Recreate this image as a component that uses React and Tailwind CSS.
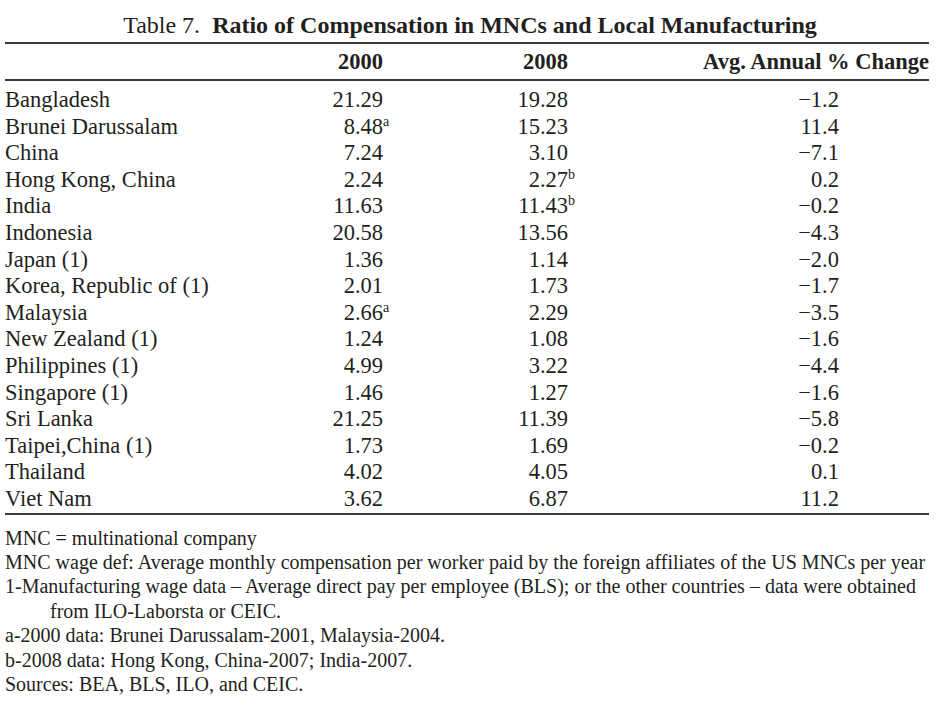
const rows = [
  { name: "Bangladesh", a: "21.29", b: "19.28", c: "\u22121.2" },
  { name: "Brunei Darussalam", a: "8.48", aSup: "a", b: "15.23", c: "11.4" },
  { name: "China", a: "7.24", b: "3.10", c: "\u22127.1" },
  { name: "Hong Kong, China", a: "2.24", b: "2.27", bSup: "b", c: "0.2" },
  { name: "India", a: "11.63", b: "11.43", bSup: "b", c: "\u22120.2" },
  { name: "Indonesia", a: "20.58", b: "13.56", c: "\u22124.3" },
  { name: "Japan (1)", a: "1.36", b: "1.14", c: "\u22122.0" },
  { name: "Korea, Republic of (1)", a: "2.01", b: "1.73", c: "\u22121.7" },
  { name: "Malaysia", a: "2.66", aSup: "a", b: "2.29", c: "\u22123.5" },
  { name: "New Zealand (1)", a: "1.24", b: "1.08", c: "\u22121.6" },
  { name: "Philippines (1)", a: "4.99", b: "3.22", c: "\u22124.4" },
  { name: "Singapore (1)", a: "1.46", b: "1.27", c: "\u22121.6" },
  { name: "Sri Lanka", a: "21.25", b: "11.39", c: "\u22125.8" },
  { name: "Taipei,China (1)", a: "1.73", b: "1.69", c: "\u22120.2" },
  { name: "Thailand", a: "4.02", b: "4.05", c: "0.1" },
  { name: "Viet Nam", a: "3.62", b: "6.87", c: "11.2" },
];

// number with optional superscript hanging past the right edge
function Num({ value, sup }) {
  return (
    <span className="relative">
      {value}
      {sup && (
        <span className="absolute left-full top-[1px] text-[14px] leading-none">{sup}</span>
      )}
    </span>
  );
}

export default function App() {
  return (
    <div
      className="w-[940px] h-[706px] bg-white text-[#231f20] overflow-hidden"
      style={{ fontFamily: '"Liberation Serif", "Times New Roman", serif' }}
    >
      <div className="pt-[11px] text-center text-[24px] leading-[28px]">
        Table 7.&nbsp;&nbsp;
        <span className="font-bold">Ratio of Compensation in MNCs and Local Manufacturing</span>
      </div>

      <table className="ml-[5px] mt-[3px] w-[924px] border-collapse table-fixed">
        <colgroup>
          <col className="w-[296px]" />
          <col className="w-[82px]" />
          <col className="w-[185px]" />
          <col className="w-[361px]" />
        </colgroup>
        <thead>
          <tr className="border-t-2 border-b-2 border-[#3a3a3a] text-[22.5px] font-bold">
            <th className="h-[37px]"></th>
            <th className="text-right">2000</th>
            <th className="text-right">2008</th>
            <th className="text-right">Avg. Annual % Change</th>
          </tr>
        </thead>
        <tbody className="text-[22.5px] leading-[26.6px] border-b-2 border-[#3a3a3a]">
          <tr>
            <td colSpan="4" className="h-[7px] p-0"></td>
          </tr>
          {rows.map((r) => (
            <tr key={r.name}>
              <td className="whitespace-nowrap">{r.name}</td>
              <td className="text-right">
                <Num value={r.a} sup={r.aSup} />
              </td>
              <td className="text-right">
                <Num value={r.b} sup={r.bSup} />
              </td>
              <td className="text-right pr-[90px]">{r.c}</td>
            </tr>
          ))}
        </tbody>
      </table>

      <div className="pl-[5px] pt-[11px] text-[20px] leading-[24.4px]">
        <div>MNC = multinational company</div>
        <div>
          MNC wage def: Average monthly compensation per worker paid by the foreign affiliates of the US MNCs per year
        </div>
        <div className="pl-[45px] -indent-[45px]">
          1-Manufacturing wage data – Average direct pay per employee (BLS); or the other countries – data were obtained
          from ILO-Laborsta or CEIC.
        </div>
        <div>a-2000 data: Brunei Darussalam-2001, Malaysia-2004.</div>
        <div>b-2008 data: Hong Kong, China-2007; India-2007.</div>
        <div>Sources: BEA, BLS, ILO, and CEIC.</div>
      </div>
    </div>
  );
}
